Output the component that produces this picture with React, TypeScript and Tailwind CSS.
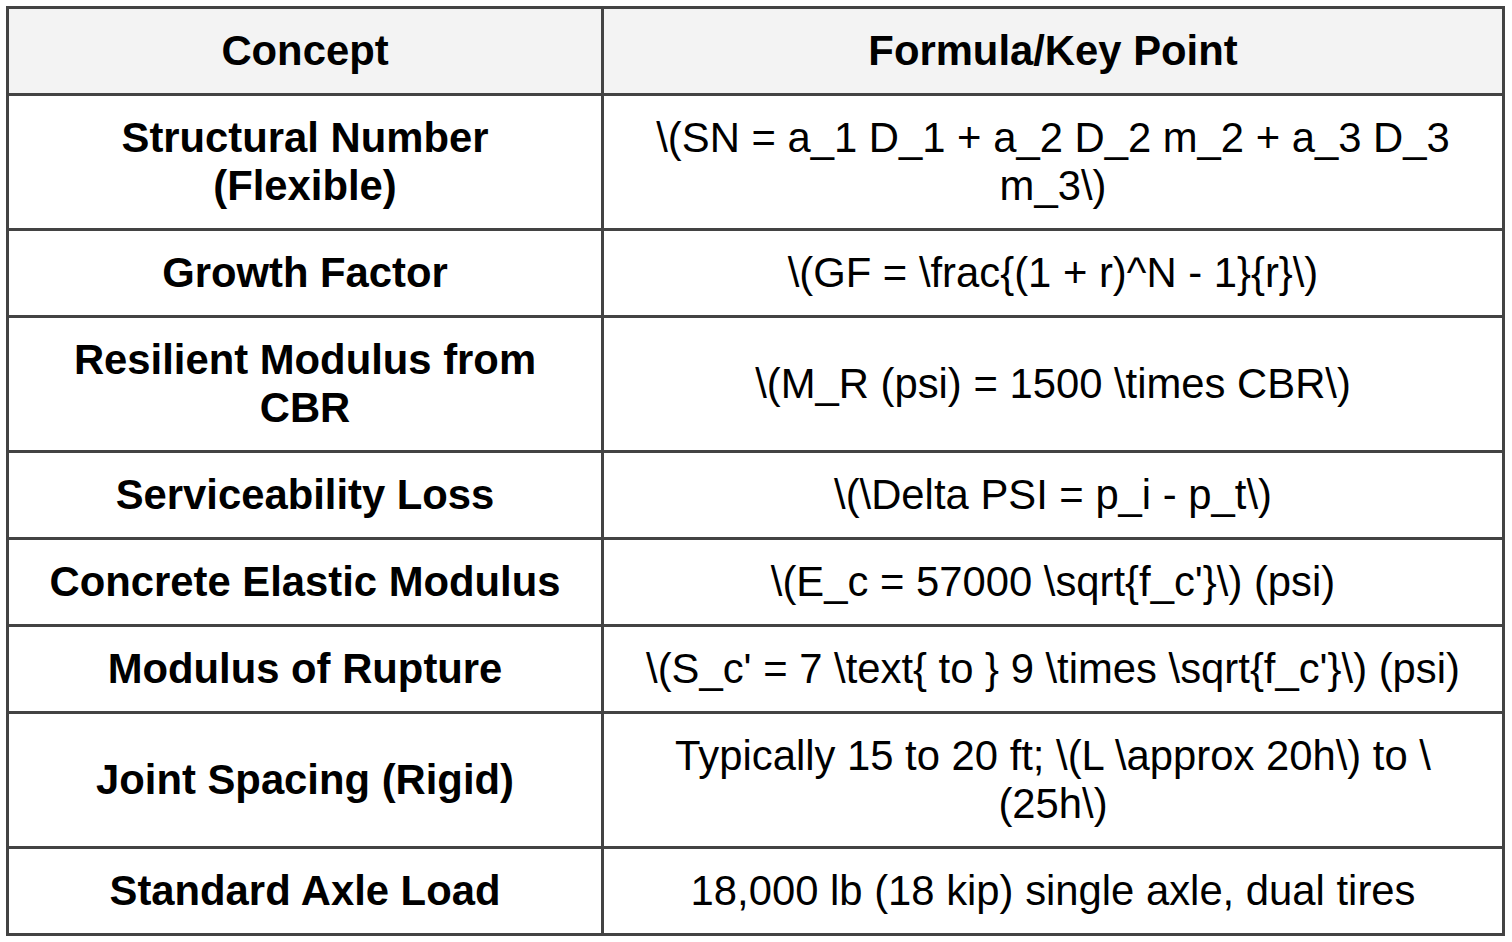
import { Fragment } from "react";

const rows: [string, string][] = [
  ["Structural Number (Flexible)", "\\(SN = a_1 D_1 + a_2 D_2 m_2 + a_3 D_3 m_3\\)"],
  ["Growth Factor", "\\(GF = \\frac{(1 + r)^N - 1}{r}\\)"],
  ["Resilient Modulus from CBR", "\\(M_R (psi) = 1500 \\times CBR\\)"],
  ["Serviceability Loss", "\\(\\Delta PSI = p_i - p_t\\)"],
  ["Concrete Elastic Modulus", "\\(E_c = 57000 \\sqrt{f_c'}\\) (psi)"],
  ["Modulus of Rupture", "\\(S_c' = 7 \\text{ to } 9 \\times \\sqrt{f_c'}\\) (psi)"],
  ["Joint Spacing (Rigid)", "Typically 15 to 20 ft; \\(L \\approx 20h\\) to \\(25h\\)"],
  ["Standard Axle Load", "18,000 lb (18 kip) single axle, dual tires"],
];

export default function App() {
  return (
    <div className="min-h-screen bg-white pl-[6px] pt-[6px] font-['Liberation_Sans',Arial,sans-serif] text-black">
      <div className="grid w-[1499px] grid-cols-[592px_898px] gap-[3px] bg-[#434343] p-[3px] text-[41.8px] leading-[48px]">
        {/* header */}
        <div className="flex items-center justify-center bg-[#f3f3f3] px-[36px] py-[18px] text-center font-bold">
          Concept
        </div>
        <div className="flex items-center justify-center bg-[#f3f3f3] px-[24px] py-[18px] text-center font-bold">
          Formula/Key Point
        </div>

        {rows.map(([concept, formula]) => (
          <Fragment key={concept}>
            <div className="flex items-center justify-center bg-white px-[36px] py-[18px] text-center font-bold">
              {concept}
            </div>
            <div className="flex items-center justify-center bg-white px-[24px] py-[18px] text-center">
              {formula}
            </div>
          </Fragment>
        ))}
      </div>
    </div>
  );
}
